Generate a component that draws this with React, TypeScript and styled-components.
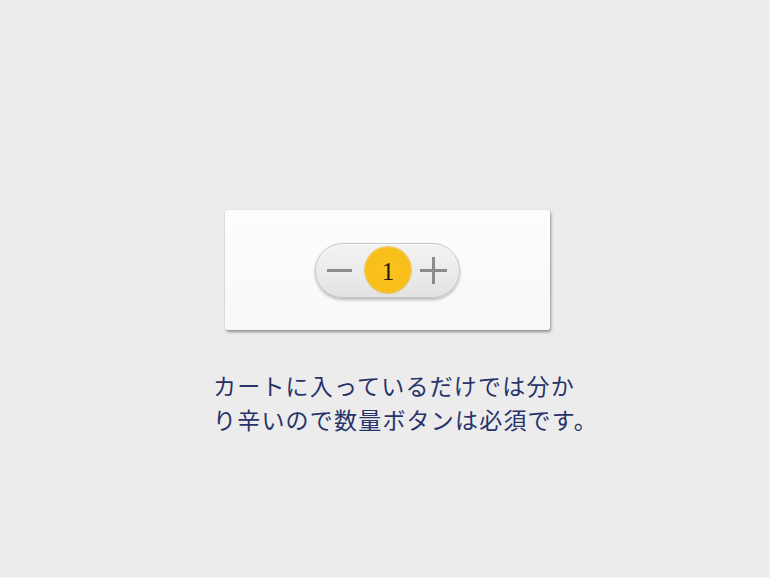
import React from "react";
import styled, { createGlobalStyle } from "styled-components";

const Global = createGlobalStyle`
  html, body { margin: 0; padding: 0; background: #ececec; }
  body { font-family: "Noto Sans CJK JP", "Noto Sans", sans-serif; }
`;

const Page = styled.div`
  width: 770px;
  height: 578px;
  box-sizing: border-box;
  border-right: 1px solid #f7f7f7;
  border-bottom: 1px solid #f7f7f7;
  background: #ececec;
  display: flex;
  flex-direction: column;
  align-items: flex-start;
  padding: 210px 0 0 213px;
`;

const Card = styled.div`
  margin-left: 12px;
  width: 325px;
  height: 120px;
  box-sizing: border-box;
  border-radius: 3px;
  background: linear-gradient(180deg, #fdfdfd 0%, #f8f8f8 100%);
  box-shadow: 1px 2px 3px rgba(0, 0, 0, 0.38), 0 0 1px rgba(0, 0, 0, 0.2);
  display: flex;
  align-items: center;
  justify-content: center;
`;

const Pill = styled.div`
  width: 145px;
  height: 55px;
  box-sizing: border-box;
  border-radius: 28px;
  border: 1px solid #c6c6c6;
  background: linear-gradient(180deg, #f3f3f3 0%, #eaeaea 60%, #e2e2e2 100%);
  box-shadow: 0 2px 3px rgba(0, 0, 0, 0.25), inset 0 1px 0 #fafafa;
  display: flex;
  align-items: center;
  padding: 0 0 0 11px;
`;

const StepButton = styled.button<{ $plus?: boolean }>`
  position: relative;
  width: ${(p) => (p.$plus ? 27 : 25)}px;
  height: 27px;
  padding: 0;
  border: 0;
  background: transparent;
  margin-right: ${(p) => (p.$plus ? 0 : 13)}px;
  margin-left: ${(p) => (p.$plus ? 9 : 0)}px;
  &::before {
    content: "";
    position: absolute;
    left: 0;
    right: 0;
    top: 12px;
    height: 3px;
    background: #8b8b8b;
  }
  &::after {
    content: "";
    display: ${(p) => (p.$plus ? "block" : "none")};
    position: absolute;
    top: 0;
    bottom: 0;
    left: 12px;
    width: 3px;
    background: #8b8b8b;
  }
`;

const Count = styled.div`
  width: 46px;
  height: 46px;
  border-radius: 50%;
  background: radial-gradient(circle at 50% 45%, #fbc31c 0%, #f8be1a 70%, #f0b515 100%);
  box-shadow: 0 0 0 1px rgba(230, 170, 20, 0.6);
  display: flex;
  align-items: center;
  justify-content: center;
  font-family: "Liberation Serif", "DejaVu Serif", serif;
  font-size: 25px;
  color: #1e1a10;
  line-height: 1;
  padding-top: 2px;
  box-sizing: border-box;
`;

const Caption = styled.p`
  margin: 38px 0 0 0;
  font-family: "Noto Sans CJK JP", "Noto Sans", sans-serif;
  font-size: 23px;
  line-height: 34px;
  color: #28336a;
  letter-spacing: 1.2px;
`;

export default function App() {
  return (
    <>
      <Global />
      <Page>
        <Card>
          <Pill>
            <StepButton aria-label="減らす" />
            <Count>1</Count>
            <StepButton $plus aria-label="増やす" />
          </Pill>
        </Card>
        <Caption>
          カートに入っているだけでは分か
          <br />
          り辛いので数量ボタンは必須です。
        </Caption>
      </Page>
    </>
  );
}
